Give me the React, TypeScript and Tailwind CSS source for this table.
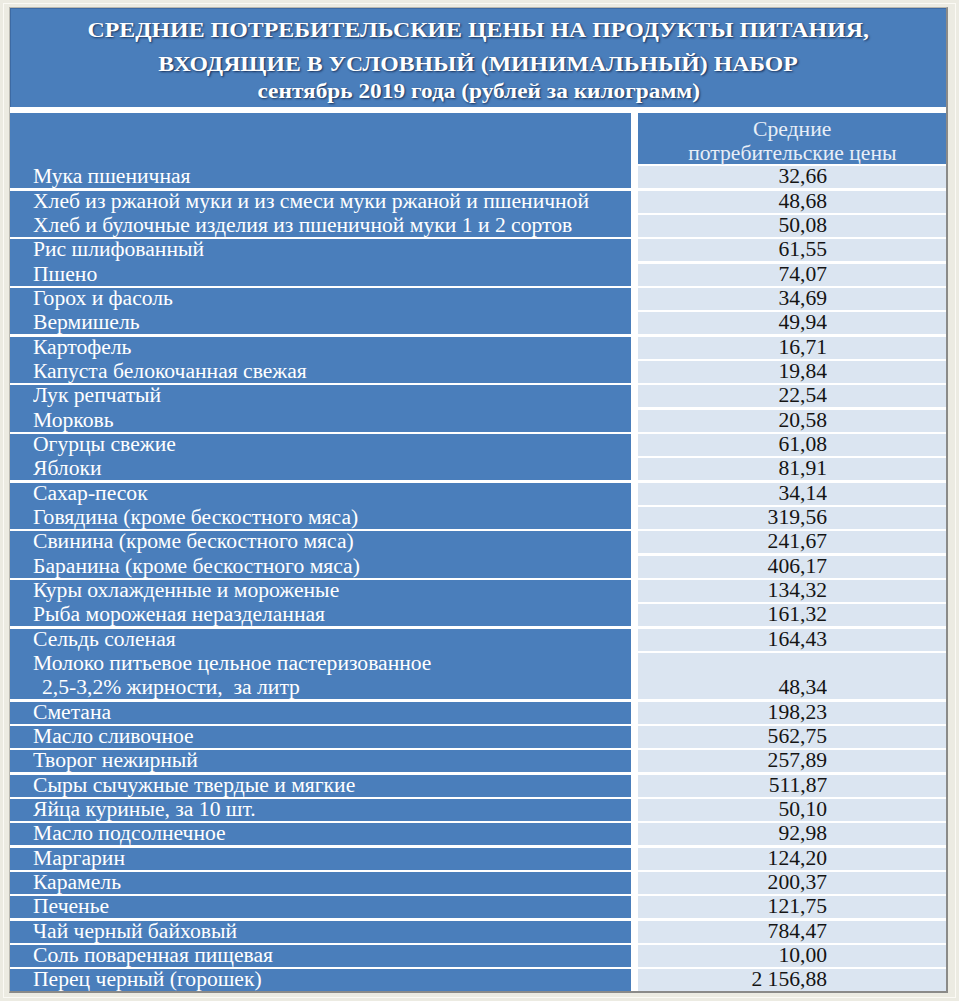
import React from "react";

type Item = { lines: string[]; value: string; double?: boolean };
type Group = { header?: boolean; items: Item[] };

const groups: Group[] = [
  { header: true, items: [{ lines: ["Мука пшеничная"], value: "32,66" }] },
  {
    items: [
      { lines: ["Хлеб из ржаной муки и из смеси муки ржаной и пшеничной"], value: "48,68" },
      { lines: ["Хлеб и булочные изделия из пшеничной муки 1 и 2 сортов"], value: "50,08" },
    ],
  },
  {
    items: [
      { lines: ["Рис шлифованный"], value: "61,55" },
      { lines: ["Пшено"], value: "74,07" },
    ],
  },
  {
    items: [
      { lines: ["Горох и фасоль"], value: "34,69" },
      { lines: ["Вермишель"], value: "49,94" },
    ],
  },
  {
    items: [
      { lines: ["Картофель"], value: "16,71" },
      { lines: ["Капуста белокочанная свежая"], value: "19,84" },
    ],
  },
  {
    items: [
      { lines: ["Лук репчатый"], value: "22,54" },
      { lines: ["Морковь"], value: "20,58" },
    ],
  },
  {
    items: [
      { lines: ["Огурцы свежие"], value: "61,08" },
      { lines: ["Яблоки"], value: "81,91" },
    ],
  },
  {
    items: [
      { lines: ["Сахар-песок"], value: "34,14" },
      { lines: ["Говядина (кроме бескостного мяса)"], value: "319,56" },
    ],
  },
  {
    items: [
      { lines: ["Свинина (кроме бескостного мяса)"], value: "241,67" },
      { lines: ["Баранина (кроме бескостного мяса)"], value: "406,17" },
    ],
  },
  {
    items: [
      { lines: ["Куры охлажденные и мороженые"], value: "134,32" },
      { lines: ["Рыба мороженая неразделанная"], value: "161,32" },
    ],
  },
  {
    items: [
      { lines: ["Сельдь соленая"], value: "164,43" },
      {
        lines: ["Молоко питьевое цельное пастеризованное", "2,5-3,2% жирности,  за литр"],
        value: "48,34",
        double: true,
      },
    ],
  },
  { items: [{ lines: ["Сметана"], value: "198,23" }] },
  { items: [{ lines: ["Масло сливочное"], value: "562,75" }] },
  { items: [{ lines: ["Творог нежирный"], value: "257,89" }] },
  { items: [{ lines: ["Сыры сычужные твердые и мягкие"], value: "511,87" }] },
  { items: [{ lines: ["Яйца куриные, за 10 шт."], value: "50,10" }] },
  { items: [{ lines: ["Масло подсолнечное"], value: "92,98" }] },
  { items: [{ lines: ["Маргарин"], value: "124,20" }] },
  { items: [{ lines: ["Карамель"], value: "200,37" }] },
  { items: [{ lines: ["Печенье"], value: "121,75" }] },
  { items: [{ lines: ["Чай черный байховый"], value: "784,47" }] },
  { items: [{ lines: ["Соль поваренная пищевая"], value: "10,00" }] },
  { items: [{ lines: ["Перец черный (горошек)"], value: "2 156,88" }] },
];

function GroupRow({ group }: { group: Group }) {
  const lines: { text: string; indent: boolean }[] = [];
  group.items.forEach((it) =>
    it.lines.forEach((l, i) => lines.push({ text: l, indent: i > 0 }))
  );
  return (
    <div className="flex gap-x-[7px]">
      <div className="w-[621px] bg-[#4a7ebb] flex flex-col justify-end gap-y-[2.4px] pl-[23px]">
        {lines.map((l, i) => (
          <div
            key={i}
            className={
              "h-[21.95px] leading-[21.95px] text-[20px] text-white whitespace-pre " +
              (l.indent ? "pl-[9px]" : "")
            }
          >
            <span className="inline-block origin-left scale-x-[1.08]">{l.text}</span>
          </div>
        ))}
      </div>
      <div className="w-[308px] flex flex-col gap-y-[2.4px]">
        {group.header && (
          <div className="h-[51px] bg-[#4a7ebb] flex flex-col items-center pt-[4px] text-[20px] leading-[24px] text-[#e8eef7]">
            <span className="inline-block scale-x-[1.08]">Средние</span>
            <span className="inline-block scale-x-[1.08]">потребительские цены</span>
          </div>
        )}
        {group.items.map((it, i) => (
          <div
            key={i}
            className={
              (it.double ? "h-[46.3px]" : "h-[21.95px]") +
              " bg-[#dbe5f1] flex items-end justify-end pr-[119px] text-[20px] leading-[21.95px] text-[#141414] whitespace-pre"
            }
          >
            <span className="inline-block origin-right scale-x-[1.08]">{it.value}</span>
          </div>
        ))}
      </div>
    </div>
  );
}

export default function App() {
  return (
    <div className="w-[959px] h-[1001px] overflow-hidden bg-[#ecebe2] p-[3px] font-['Liberation_Serif','Times_New_Roman',serif]">
      <div className="h-[995px] border border-[#fbfaf5] pt-[3px] pl-[5px]">
        <div className="w-[939px] border-t border-l border-t-[#b9b8b0] border-l-[#b9b8b0] border-r-2 border-b-2 border-r-[#8a8a88] border-b-[#8a8a88] bg-white flex flex-col">
          <div className="h-[99px] bg-[#4a7ebb] border-t border-l border-t-[#3d6aa3] border-l-[#3d6aa3] flex flex-col items-center pt-[4px] font-bold text-white [text-shadow:1px_1px_2px_rgba(18,38,75,0.85)]">
            <div className="text-[22px] leading-[34px]">
              <span className="inline-block scale-x-[1.085]">
                СРЕДНИЕ ПОТРЕБИТЕЛЬСКИЕ ЦЕНЫ НА ПРОДУКТЫ ПИТАНИЯ,
              </span>
            </div>
            <div className="text-[22px] leading-[34px]">
              <span className="inline-block scale-x-[1.08]">
                ВХОДЯЩИЕ В УСЛОВНЫЙ (МИНИМАЛЬНЫЙ) НАБОР
              </span>
            </div>
            <div className="text-[22px] leading-[19px]">
              <span className="inline-block scale-x-[1.06]">
                сентябрь 2019 года (рублей за килограмм)
              </span>
            </div>
          </div>
          <div className="h-[6px]" />
          <div className="flex flex-col gap-y-[2.4px]">
            {groups.map((g, i) => (
              <GroupRow key={i} group={g} />
            ))}
          </div>
        </div>
      </div>
    </div>
  );
}
